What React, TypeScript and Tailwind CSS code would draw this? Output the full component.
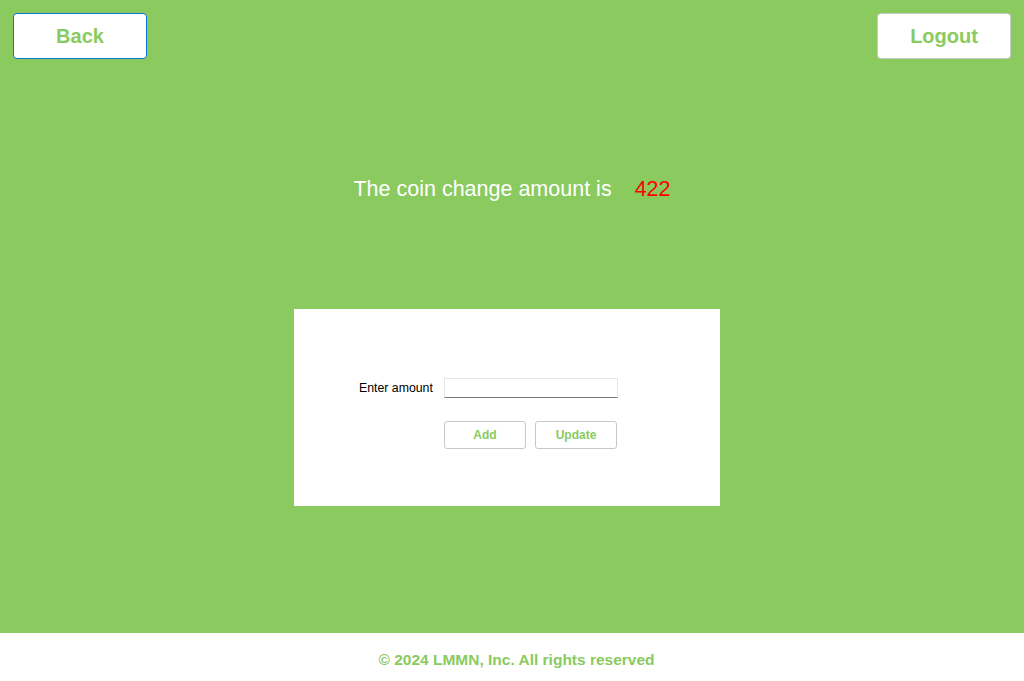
export default function App() {
  return (
    <div className="flex h-[681px] w-full flex-col bg-[#8aca5f] font-['Liberation_Sans',Arial,sans-serif]">
      <div className="flex-1">
        <div className="flex items-start justify-between px-[13px] pt-[13px]">
          <button className="h-[46px] w-[134px] rounded-[4px] border border-[#0a74d4] bg-white text-[20px] font-bold text-[#8aca5f]">
            Back
          </button>
          <button className="h-[46px] w-[134px] rounded-[4px] border border-[#c9c9c9] bg-white text-[20px] font-bold text-[#8aca5f]">
            Logout
          </button>
        </div>

        <div className="mt-[118px] flex items-center justify-center text-[21.5px] leading-[24px]">
          <span className="text-white">The coin change amount is</span>
          <span className="ml-[23px] text-[#ff0000]">422</span>
        </div>

        <div className="mt-[108px] flex justify-center pr-[10px]">
          <div className="flex h-[197px] w-[426px] flex-col bg-white pl-[65px] pt-[69px]">
            <div className="flex items-center">
              <label className="w-[85px] text-[12.3px] text-black">Enter amount</label>
              <input className="h-[20px] w-[174px] border border-[#e6e6e6] border-b-[#7a7a7a] bg-white px-1 text-[12px] outline-none" />
            </div>
            <div className="ml-[85px] mt-[23px] flex gap-[9px]">
              <button className="h-[28px] w-[82px] rounded-[3px] border border-[#c8c8c8] bg-white text-[12px] font-bold text-[#8aca5f]">
                Add
              </button>
              <button className="h-[28px] w-[82px] rounded-[3px] border border-[#c8c8c8] bg-white text-[12px] font-bold text-[#8aca5f]">
                Update
              </button>
            </div>
          </div>
        </div>
      </div>

      <footer className="flex h-[48px] items-center justify-center bg-white pl-[9px] pt-[6px] text-[15.5px] font-bold text-[#8aca5f]">
        © 2024 LMMN, Inc. All rights reserved
      </footer>
    </div>
  );
}
